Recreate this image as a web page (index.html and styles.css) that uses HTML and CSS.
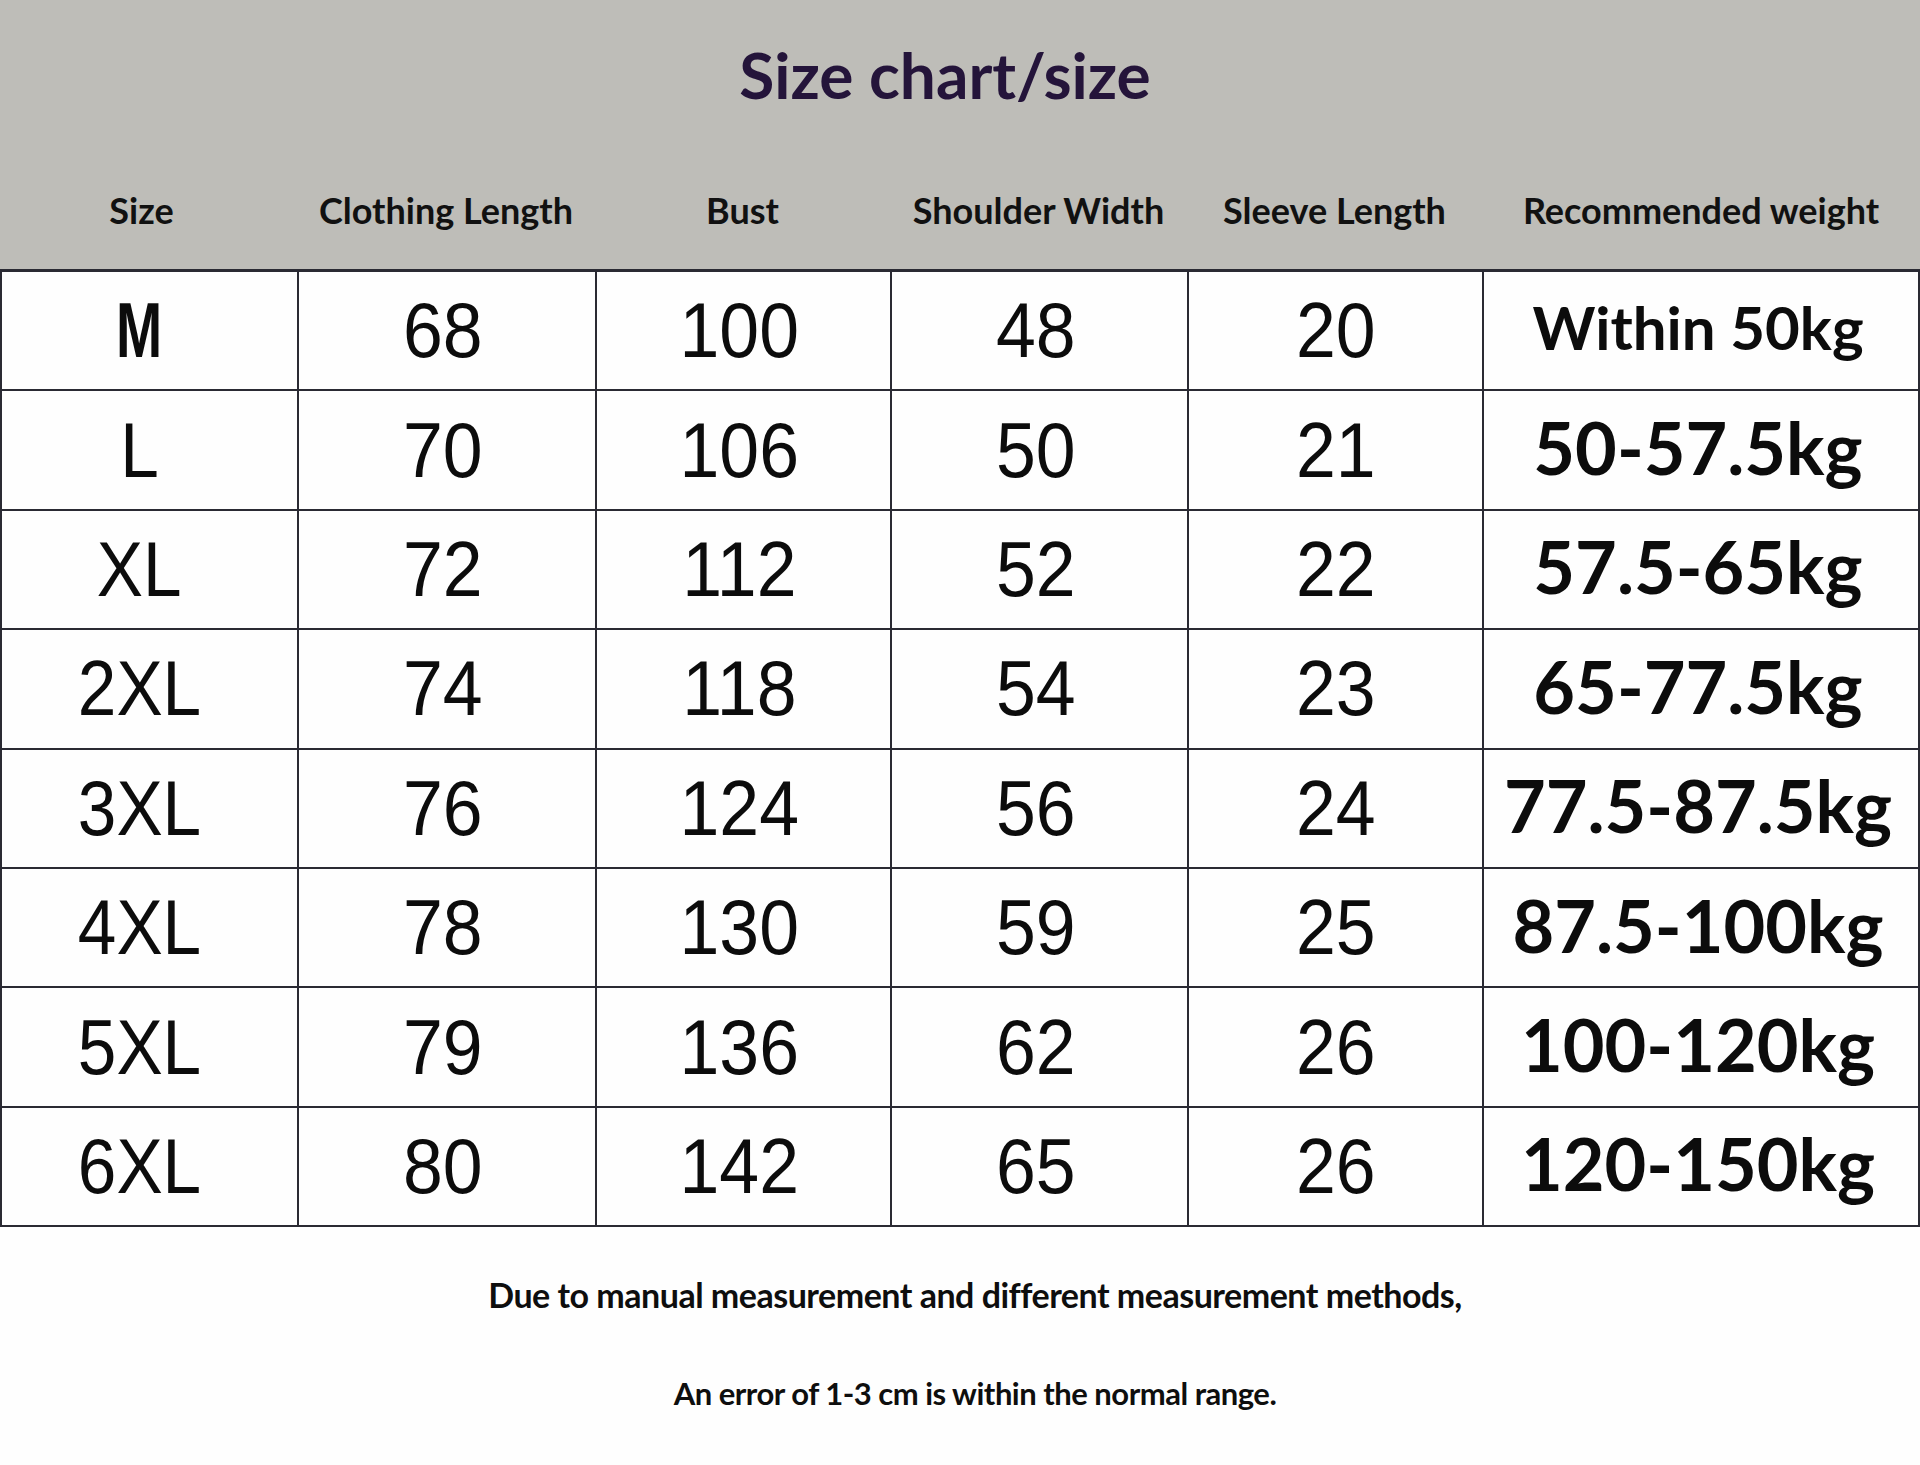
FILE: index.html
```html
<!DOCTYPE html>
<html lang="en">
<head>
<meta charset="utf-8">
<title>Size chart/size</title>
<link rel="stylesheet" href="styles.css">
</head>
<body>
<div class="page">
  <header class="head">
    <h1 class="title">Size chart/size</h1>
    <div class="labels">
      <div class="label">Size</div>
      <div class="label">Clothing Length</div>
      <div class="label">Bust</div>
      <div class="label">Shoulder Width</div>
      <div class="label">Sleeve Length</div>
      <div class="label">Recommended weight</div>
    </div>
  </header>
  <div class="grid">
    <div class="cell num size"><span class="m">M</span></div><div class="cell num mid"><span>68</span></div><div class="cell num mid"><span>100</span></div><div class="cell num mid"><span>48</span></div><div class="cell num"><span>20</span></div><div class="cell wt small">Within 50kg</div>
    <div class="cell num size"><span>L</span></div><div class="cell num mid"><span>70</span></div><div class="cell num mid"><span>106</span></div><div class="cell num mid"><span>50</span></div><div class="cell num"><span>21</span></div><div class="cell wt">50-57.5kg</div>
    <div class="cell num size"><span>XL</span></div><div class="cell num mid"><span>72</span></div><div class="cell num mid"><span>112</span></div><div class="cell num mid"><span>52</span></div><div class="cell num"><span>22</span></div><div class="cell wt">57.5-65kg</div>
    <div class="cell num size"><span>2XL</span></div><div class="cell num mid"><span>74</span></div><div class="cell num mid"><span>118</span></div><div class="cell num mid"><span>54</span></div><div class="cell num"><span>23</span></div><div class="cell wt">65-77.5kg</div>
    <div class="cell num size"><span>3XL</span></div><div class="cell num mid"><span>76</span></div><div class="cell num mid"><span>124</span></div><div class="cell num mid"><span>56</span></div><div class="cell num"><span>24</span></div><div class="cell wt">77.5-87.5kg</div>
    <div class="cell num size"><span>4XL</span></div><div class="cell num mid"><span>78</span></div><div class="cell num mid"><span>130</span></div><div class="cell num mid"><span>59</span></div><div class="cell num"><span>25</span></div><div class="cell wt">87.5-100kg</div>
    <div class="cell num size"><span>5XL</span></div><div class="cell num mid"><span>79</span></div><div class="cell num mid"><span>136</span></div><div class="cell num mid"><span>62</span></div><div class="cell num"><span>26</span></div><div class="cell wt">100-120kg</div>
    <div class="cell num size"><span>6XL</span></div><div class="cell num mid"><span>80</span></div><div class="cell num mid"><span>142</span></div><div class="cell num mid"><span>65</span></div><div class="cell num"><span>26</span></div><div class="cell wt">120-150kg</div>
  </div>
  <footer class="notes">
    <p class="note first">Due to manual measurement and different measurement methods,</p>
    <p class="note second">An error of 1-3 cm is within the normal range.</p>
  </footer>
</div>
</body>
</html>
```
FILE: styles.css
```css
* { box-sizing: border-box; }
html, body { margin: 0; padding: 0; background: #fefefe; }
.page { width: 1920px; height: 1465px; overflow: hidden; font-family: Lato, "Liberation Sans", sans-serif; }

.head {
  height: 269px;
  background: #bebdb8;
  display: flex;
  flex-direction: column;
}
.title {
  margin: 0;
  height: 150px;
  padding-top: 35px;
  padding-right: 30px;
  text-align: center;
  font-size: 64px;
  line-height: 80px;
  font-weight: 700;
  color: #24143a;
}
.labels {
  display: grid;
  grid-template-columns: 297px 298px 295px 297px 295px 1fr;
  height: 119px;
  align-items: start;
  padding-top: 35px;
}
.label {
  text-align: center;
  font-size: 36px;
  line-height: 50px;
  font-weight: 700;
  color: #111;
}
.label:first-child { padding-right: 14px; }

.grid {
  display: grid;
  grid-template-columns: 297px 298px 295px 297px 295px 1fr;
  grid-auto-rows: 119.4px;
  border-top: 3px solid #2a2a33;
  border-left: 2px solid #2a2a33;
  border-right: 2px solid #2a2a33;
}
.cell {
  display: flex;
  align-items: center;
  justify-content: center;
  border-right: 2px solid #2a2a33;
  border-bottom: 2px solid #2a2a33;
  color: #0c0c0c;
}
.cell:nth-child(6n) { border-right: none; }
.num {
  font-family: "Liberation Sans", Arial, sans-serif;
  font-size: 77px;
}
.num span { display: inline-block; transform: scaleX(0.93); }
.num.mid { padding-right: 8px; }
.num.size { padding-right: 20px; }
.num.size span { transform: scaleX(0.9); }
.num.size span.m { transform: scaleX(0.72); font-weight: 700; }
.wt {
  font-family: Lato, "Liberation Sans", sans-serif;
  font-weight: 700;
  font-size: 72px;
  padding-right: 6px;
  padding-bottom: 6px;
}
.wt.small { font-size: 60px; padding-bottom: 8px; }

.notes {
  padding-top: 43px;
  padding-left: 30px;
  text-align: center;
}
.note {
  margin: 0;
  font-weight: 700;
  line-height: 50px;
  color: #0e0e0e;
  letter-spacing: -0.5px;
}
.note.first { font-size: 34px; }
.note.second { font-size: 31px; margin-top: 48px; }
```
